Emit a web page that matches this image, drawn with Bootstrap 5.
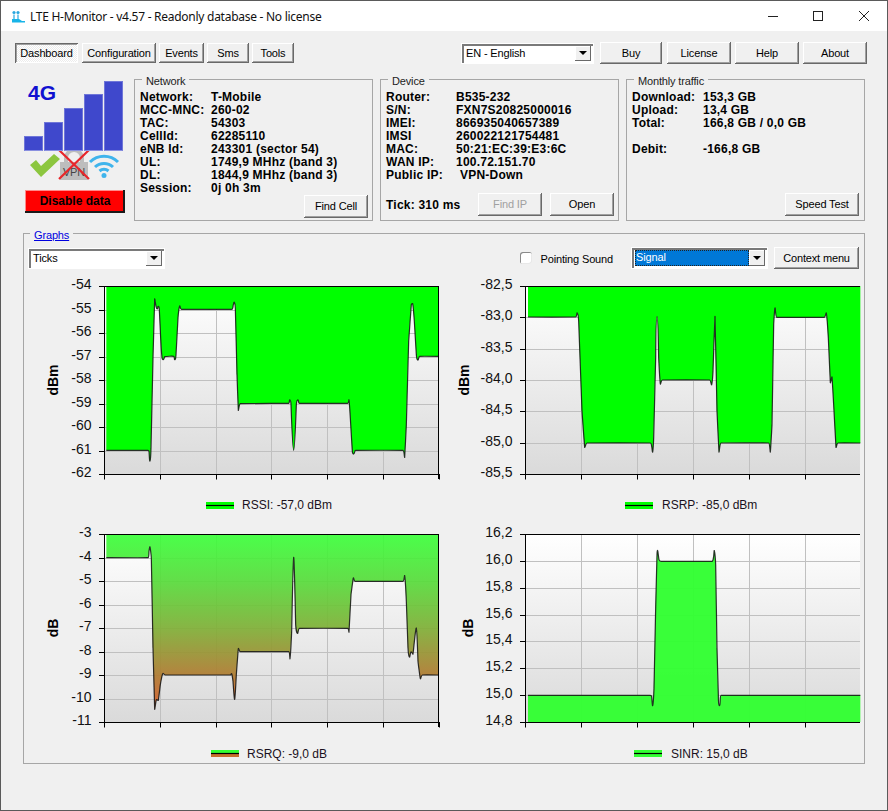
<!DOCTYPE html>
<html lang="en">
<head>
<meta charset="utf-8">
<title>LTE H-Monitor</title>
<link href="https://cdn.jsdelivr.net/npm/bootstrap@5.3.0/dist/css/bootstrap.min.css" rel="stylesheet">
<style>
html,body{margin:0;background:#f0f0f0;}
body{font-family:"Liberation Sans",Arial,sans-serif;font-size:11px;line-height:13px;color:#000;letter-spacing:-.15px;overflow:hidden;}
.appwin{width:888px;height:811px;background:#f0f0f0;outline:1px solid #5a5a5a;outline-offset:-1px;position:relative;}
.titlebar{height:31px;background:#fff;padding-left:11px;border-top:1px solid #444;}
.titletext{font-family:"Noto Sans",sans-serif;font-size:12px;letter-spacing:-.27px;color:#111;margin-left:4px;}
.winctl{margin-left:auto;}
.toprow{height:42px;padding:11px 21px 0 15px;}
.wbtn{--bs-btn-padding-x:0;--bs-btn-padding-y:0;font-family:"Liberation Sans",Arial,sans-serif;font-size:11px;letter-spacing:-.15px;line-height:13px;color:#000;background:#f0f0f0;border:0;border-radius:0;height:22px;padding:0;box-shadow:inset -1px -1px 0 #696969,inset 1px 1px 0 #fff,inset -2px -2px 0 #a0a0a0;}
.wbtn:disabled{color:#a0a0a0;background:#f0f0f0;opacity:1;}
.tabbtn{height:20px;}
.tabrow{margin-top:1px;}
.tabon{margin-right:1px;background:repeating-conic-gradient(#fff 0 25%,#ececec 0 50%) 0 0/2px 2px;box-shadow:inset 1px 1px 0 #696969,inset -1px -1px 0 #fff,inset 2px 2px 0 #a0a0a0;}
.w-dash{width:63px}.w-conf{width:74px}.w-ev{width:45px}.w-sms{width:42px}.w-tools{width:42px}
.w-62{width:62px}.w-64{width:64px}.w-74{width:74px}.w-85{width:85px}
.gap-3px{gap:3px}.gap-4px{gap:4px}
.wcombo{height:19px;background:#fff;box-shadow:inset 2px 2px 0 #7a7a7a,inset -1px -1px 0 #fff;padding:2px 2px 2px 3px;font-size:11px;line-height:15px;outline:1px solid #fff;outline-offset:0;}
.wcombo-lang{width:131px;margin-right:3px;}
.wcombo-ticks{width:135px;}
.wcombo-sig{width:135px;height:20px;}
.combotext{flex:1;min-width:0;padding-left:1px;}
.combosel{background:#0078d7;color:#fff;outline:1px dotted #222;outline-offset:-1px;}
.comboarrow{width:16px;background:#f0f0f0;box-shadow:inset -1px -1px 0 #696969,inset 1px 1px 0 #fff;}
.comboarrow::after{content:"";border-left:4px solid transparent;border-right:4px solid transparent;border-top:4px solid #000;}
.buygap{margin-right:1px;}
.inforow{height:148px;padding-left:15px;}
.leftcol{width:119px;flex:none;}
.sigwrap{width:99px;height:70px;margin:8px 0 0 9px;gap:1px;position:relative;}
.sigbar{width:19px;background:#3f48cc;border:1px solid #6f76d8;border-bottom-color:#8a90e0;}
.tag4g{position:absolute;left:4px;top:0;font-size:21px;line-height:24px;font-weight:700;color:#1010d0;letter-spacing:0;}
.stateicons{display:block;margin:-1px 0 0 9px;}
.redbtn{display:block;width:100px;height:23px;margin:10px 0 0 10px;background:#f00;color:#000;font-weight:700;font-size:12px;letter-spacing:0;box-shadow:inset -2px -2px 0 #1a1a1a,inset 1px 1px 0 #ff8a8a;}
.redbtn:hover{background:#f00;color:#000;}
.gbox{border:1px solid #a6a6a6;border-radius:0;margin:0;min-width:0;padding:3px 4px 4px 5px;}
.gbox>legend{float:none;width:auto;font-size:11px;line-height:13px;margin:0 0 0 2px;padding:4px 4px 0;color:#222;}
.infobox{width:239px;height:150px;margin:-2px 7px 0 0;}
.infobox.lastbox{padding-right:5px;margin-right:0;}
.datagrid{display:grid;grid-template-columns:71px 1fr;font-weight:700;font-size:12px;line-height:13px;letter-spacing:.22px;color:#000;}
.devgrid{grid-template-columns:70px 1fr;}
.datagrid span{white-space:nowrap;}
.pushval{padding-left:4px;}
.tickval{font-weight:700;font-size:12px;letter-spacing:.22px;margin-top:2px;}
.footrow{height:23px;}
.graphbox{width:842px;height:539px;margin:4px 0 0 23px;padding:5px 5px 0 5px;}
.graphbox>legend{margin-left:1px;}
.graphbox>legend a{color:#0000e0;}
.ctlrow{height:22px;}
.wcheck{width:12px;height:12px;margin:0 8px 0 0;border-radius:0;border:0;background:#fff;box-shadow:inset 1px 1px 0 #8a8a8a,inset -1px -1px 0 #e8e8e8;flex:none;}
.sndlabel{margin:2px 19px 0 0;}
.sigcombo{margin-right:7px;}
.chartgrid{display:grid;grid-template-columns:412px 412px;column-gap:9px;row-gap:5px;margin:3px 0 0 1px;}
.chartsvg{display:block;width:412px;height:243px;overflow:visible;}
.chartsvg text{font-family:"Liberation Sans",Arial,sans-serif;letter-spacing:0;}
</style>
</head>
<body>
<div class="appwin">
  <div class="titlebar d-flex align-items-center">
    <svg width="15" height="15" viewBox="0 0 15 15">
      <path d="M3 5.500V10M7 5.500V10" stroke="#2aa7df" stroke-width="1.200" fill="none"/>
      <circle cx="3" cy="3.500" r="1.600" fill="#2aa7df"/><circle cx="7" cy="3.500" r="1.600" fill="#2aa7df"/>
      <path d="M1 10h7l3 2h3v1.500H1z" fill="#18b4e8"/>
    </svg>
    <span class="titletext">LTE H-Monitor - v4.57 - Readonly database - No license</span>
    <svg class="winctl" width="120" height="30" viewBox="0 0 120 30">
      <path d="M0 15.500h10" stroke="#222" fill="none"/>
      <rect x="45.500" y="10.500" width="9" height="9" stroke="#222" fill="none"/>
      <path d="M91 10 101 20M101 10 91 20" stroke="#222" fill="none"/>
    </svg>
  </div>

  <div class="toprow d-flex align-items-start">
    <div class="tabrow d-flex gap-3px">
      <button type="button" class="btn wbtn tabbtn tabon w-dash">Dashboard</button>
      <button type="button" class="btn wbtn tabbtn w-conf">Configuration</button>
      <button type="button" class="btn wbtn tabbtn w-ev">Events</button>
      <button type="button" class="btn wbtn tabbtn w-sms">Sms</button>
      <button type="button" class="btn wbtn tabbtn w-tools">Tools</button>
    </div>
    <div class="ms-auto d-flex align-items-center gap-4px">
      <div class="wcombo wcombo-lang d-flex"><span class="combotext">EN - English</span><span class="comboarrow d-flex align-items-center justify-content-center"></span></div>
      <button type="button" class="btn wbtn w-62 buygap">Buy</button>
      <button type="button" class="btn wbtn w-64">License</button>
      <button type="button" class="btn wbtn w-64">Help</button>
      <button type="button" class="btn wbtn w-64">About</button>
    </div>
  </div>

  <div class="inforow d-flex">
    <div class="leftcol">
      <div class="sigwrap d-flex align-items-end">
        <div class="sigbar" style="height:15px"></div>
        <div class="sigbar" style="height:29px"></div>
        <div class="sigbar" style="height:43px"></div>
        <div class="sigbar" style="height:57px"></div>
        <div class="sigbar" style="height:70px"></div>
        <span class="tag4g">4G</span>
      </div>
      <svg class="stateicons" width="100" height="30" viewBox="0 0 100 30">
        <path d="M6 15 12 10 17 16 30 4 36 9 17 27z" fill="#8cc63f"/>
        <path d="M42 12V8a8 8 0 0 1 16 0v4" stroke="#bdbdbd" stroke-width="4" fill="none"/>
        <rect x="36" y="12" width="28" height="18" fill="#bdbdbd"/>
        <text x="50" y="26" text-anchor="middle" font-size="11" fill="#444" font-family="Liberation Sans">VPN</text>
        <path d="M35 0 65 29M65 0 35 29" stroke="#e8262b" stroke-width="2.200"/>
        <path d="M66 12A20 20 0 0 1 94 12M71 17A13 13 0 0 1 89 17M75.500 21A7 7 0 0 1 84.500 21" stroke="#3fb4ec" stroke-width="3" fill="none"/>
        <circle cx="80" cy="25.500" r="2.500" fill="#3fb4ec"/>
      </svg>
      <button type="button" class="btn wbtn redbtn">Disable data</button>
    </div>

    <fieldset class="gbox infobox d-flex flex-column justify-content-between">
      <legend>Network</legend>
      <div class="datagrid">
        <span>Network:</span><span>T-Mobile</span>
        <span>MCC-MNC:</span><span>260-02</span>
        <span>TAC:</span><span>54303</span>
        <span>CellId:</span><span>62285110</span>
        <span>eNB Id:</span><span>243301 (sector 54)</span>
        <span>UL:</span><span>1749,9 MHhz (band 3)</span>
        <span>DL:</span><span>1844,9 MHhz (band 3)</span>
        <span>Session:</span><span>0j 0h 3m</span>
      </div>
      <div class="footrow d-flex justify-content-end"><button type="button" class="btn wbtn w-64 footrow">Find Cell</button></div>
    </fieldset>

    <fieldset class="gbox infobox d-flex flex-column justify-content-between">
      <legend>Device</legend>
      <div class="datagrid devgrid">
        <span>Router:</span><span>B535-232</span>
        <span>S/N:</span><span>FXN7S20825000016</span>
        <span>IMEI:</span><span>866935040657389</span>
        <span>IMSI</span><span>260022121754481</span>
        <span>MAC:</span><span>50:21:EC:39:E3:6C</span>
        <span>WAN IP:</span><span>100.72.151.70</span>
        <span>Public IP:</span><span class="pushval">VPN-Down</span>
      </div>
      <div class="footrow d-flex align-items-center">
        <span class="tickval me-auto">Tick: 310 ms</span>
        <button type="button" class="btn wbtn w-64 footrow me-1" disabled>Find IP</button>
        <button type="button" class="btn wbtn w-64 footrow ms-1">Open</button>
      </div>
    </fieldset>

    <fieldset class="gbox infobox lastbox d-flex flex-column justify-content-between">
      <legend>Monthly traffic</legend>
      <div class="datagrid">
        <span>Download:</span><span>153,3 GB</span>
        <span>Upload:</span><span>13,4 GB</span>
        <span>Total:</span><span>166,8 GB / 0,0 GB</span>
        <span>&nbsp;</span><span>&nbsp;</span>
        <span>Debit:</span><span>-166,8 GB</span>
      </div>
      <div class="footrow d-flex justify-content-end"><button type="button" class="btn wbtn w-74 footrow">Speed Test</button></div>
    </fieldset>
  </div>

  <fieldset class="gbox graphbox">
    <legend><a href="#">Graphs</a></legend>
    <div class="ctlrow d-flex align-items-center">
      <div class="wcombo wcombo-ticks d-flex"><span class="combotext">Ticks</span><span class="comboarrow d-flex align-items-center justify-content-center"></span></div>
      <input class="form-check-input wcheck ms-auto" type="checkbox" aria-label="Pointing Sound">
      <span class="sndlabel">Pointing Sound</span>
      <div class="wcombo wcombo-sig sigcombo d-flex"><span class="combotext combosel">Signal</span><span class="comboarrow d-flex align-items-center justify-content-center"></span></div>
      <button type="button" class="btn wbtn w-85">Context menu</button>
    </div>
    <div class="chartgrid" id="charts"></div>
  </fieldset>
</div>

<script src="https://cdn.jsdelivr.net/npm/bootstrap@5.3.0/dist/js/bootstrap.bundle.min.js"></script>
<script>
var L=[0,56,112,166.6,222.6,278.6,334.6], R=[0,56,112,168,224,280];
var charts=[
 {ox:281,oy:184,vx:L,right:true,labels:["-54","-55","-56","-57","-58","-59","-60","-61","-62"],unit:"dBm",ux:23,
  side:"top",fill:"#00ff00",op:1,sw:176,tx:212,leg:"RSSI: -57,0 dBm",ty:7,
  pts:"288,677 413,677 416,680 419,709 422,670 428,400 433,223 437,245 441,253 444,245 447,255 451,340 455,398 459,405 464,396 490,395 494,405 497,390 503,280 508,244 513,254 665,254 669,240 672,233 675,250 680,450 684,557 690,537 835,536 839,526 842,540 850,677 858,540 862,526 867,536 1012,536 1016,526 1020,580 1026,680 1030,688 1036,677 1178,677 1183,698 1188,600 1195,350 1203,240 1207,237 1212,290 1218,390 1222,406 1228,395 1285,395"},
 {ox:224,oy:184,vx:R,right:false,labels:["-82,5","-83,0","-83,5","-84,0","-84,5","-85,0","-85,5"],unit:"dBm",ux:13,
  side:"top",fill:"#00ff00",op:1,sw:174,tx:211,leg:"RSRP: -85,0 dBm",ty:7,
  pts:"233,277 376,277 381,265 385,290 395,560 403,668 410,655 600,655 604,665 607,682 610,640 616,400 620,275 625,400 630,478 636,466 778,466 784,480 788,440 794,275 800,560 806,682 812,655 955,655 960,682 965,600 970,300 974,250 979,278 1122,278 1128,265 1134,340 1140,474 1145,457 1150,540 1157,668 1163,655 1230,655"},
 {ox:281,oy:58,vx:L,right:true,labels:["-3","-4","-5","-6","-7","-8","-9","-10","-11"],unit:"dB",ux:23,
  side:"top",fill:"url(#gradq)",op:.93,sw:181,tx:217,leg:"RSRQ: -9,0 dB",swq:true,ty:8,
  pts:"288,129 413,129 416,110 419,97 423,130 428,400 433,584 438,555 444,557 450,510 457,477 465,481 660,481 664,477 668,500 673,554 678,480 684,402 690,411 835,411 839,432 844,350 850,128 856,330 861,356 867,341 1012,341 1016,352 1022,240 1029,190 1034,200 1178,200 1183,183 1188,260 1193,400 1197,427 1202,412 1208,418 1218,340 1223,440 1230,492 1236,481 1285,481"},
 {ox:224,oy:58,vx:R,right:false,labels:["16,2","16,0","15,8","15,6","15,4","15,2","15,0","14,8"],unit:"dB",ux:17,
  side:"bottom",fill:"#33ff33",op:.97,sw:183,tx:220,leg:"SINR: 15,0 dB",ty:8,
  pts:"233,542 600,542 604,545 607,573 611,520 616,280 620,120 622,108 626,135 632,140 785,140 790,125 792,108 796,150 800,400 804,540 807,573 812,542 1230,542"}
];
function smooth(p){
  var d="",i,f=function(n){return n.toFixed(2);};
  function tan(i){
    var a=p[Math.max(i-1,0)],b=p[Math.min(i+1,p.length-1)],x=b[0]-a[0],y=b[1]-a[1],l=Math.hypot(x,y)||1;
    return [x/l,y/l];
  }
  for(i=0;i<p.length-1;i++){
    var a=p[i],b=p[i+1],s=Math.min(Math.hypot(b[0]-a[0],b[1]-a[1])*.33,1.2),t1=tan(i),t2=tan(i+1);
    d+="C"+f(a[0]+t1[0]*s)+" "+f(a[1]+t1[1]*s)+" "+f(b[0]-t2[0]*s)+" "+f(b[1]-t2[1]*s)+" "+f(b[0])+" "+f(b[1]);
  }
  return d;
}
var px=74,py=14,pw=335,ph=188,h="";
charts.forEach(function(c,n){
  var s='<svg class="chartsvg" viewBox="0 0 412 243" role="img"><defs>'+
   '<linearGradient id="bg'+n+'" x1="0" y1="0" x2="0" y2="1"><stop offset="0" stop-color="#ffffff"/><stop offset="1" stop-color="#dadada"/></linearGradient>'+
   (c.swq?'<linearGradient id="gradq" gradientUnits="userSpaceOnUse" x1="0" y1="14" x2="0" y2="202"><stop offset="0" stop-color="#3cff3c"/><stop offset=".25" stop-color="#58dc3c"/><stop offset=".5" stop-color="#80b038"/><stop offset=".75" stop-color="#b07c32"/><stop offset=".95" stop-color="#dc5a2c"/></linearGradient>'+
    '<linearGradient id="swq" x1="0" y1="0" x2="0" y2="1"><stop offset="0" stop-color="#33ff33"/><stop offset=".5" stop-color="#33ff33"/><stop offset=".5" stop-color="#c8702e"/><stop offset="1" stop-color="#c8702e"/></linearGradient>':'')+
   '</defs><rect x="'+px+'" y="'+py+'" width="'+pw+'" height="'+ph+'" fill="url(#bg'+n+')"/>';
  var steps=c.labels.length-1,i,y,x;
  for(i=1;i<steps;i++){y=Math.round(i*ph/steps)+py+.5;s+='<path d="M'+px+' '+y+'h'+pw+'" stroke="#c0c0c0"/>';}
  c.vx.forEach(function(v,k){x=Math.round(v)+px+.5;if(k>0&&v<330)s+='<path d="M'+x+' '+py+'v'+ph+'" stroke="#c0c0c0"/>';});
  var p=c.pts.split(" ").map(function(q){var a=q.split(",");return [px+(a[0]-c.ox)/3,py+(a[1]-c.oy)/3];});
  var curve=smooth(p),x0=p[0][0].toFixed(2),y0=p[0][1].toFixed(2),x1=p[p.length-1][0].toFixed(2);
  var edge=c.side=="top"?py:py+ph;
  s+='<path d="M'+x0+' '+edge+'L'+x0+' '+y0+curve+'L'+x1+' '+edge+'Z" fill="'+c.fill+'" fill-opacity="'+c.op+'"/>';
  s+='<path d="M'+x0+' '+y0+curve+'" fill="none" stroke="#111" stroke-opacity=".85" stroke-width="1.2" stroke-linejoin="round"/>';
  s+='<path d="M'+(px-5)+' '+(py+.5)+'H'+(px+pw)+'M'+(px-5)+' '+(py+ph+.5)+'H'+(px+pw)+'M'+(px+.5)+' '+py+'V'+(py+ph+5)+'" stroke="#000"/>';
  if(c.right)s+='<path d="M'+(px+pw-.5)+' '+py+'V'+(py+ph+5)+'" stroke="#000"/>';
  for(i=0;i<=steps;i++){y=Math.round(i*ph/steps)+py;
    s+='<path d="M'+(px-5)+' '+(y+.5)+'H'+px+'" stroke="#000"/>';
    s+='<text x="'+(px-12.5)+'" y="'+(y+2.5)+'" text-anchor="end" font-size="14" fill="#111">'+c.labels[i]+'</text>';}
  c.vx.forEach(function(v){x=Math.round(v)+px+.5;s+='<path d="M'+x+' '+(py+ph)+'v5.500" stroke="#000"/>';});
  s+='<text transform="translate('+(c.ux+5)+' 108) rotate(-90)" text-anchor="middle" font-size="14" font-weight="700" fill="#000">'+c.unit+'</text>';
  var ly=230;
  s+='<rect x="'+c.sw+'" y="'+ly+'" width="28" height="7" fill="'+(c.swq?"url(#swq)":c.fill)+'"/><path d="M'+c.sw+' '+(ly+3.5)+'h28" stroke="#000" stroke-width="1.200"/>';
  s+='<text x="'+c.tx+'" y="'+(ly+c.ty)+'" font-size="12" fill="#1a1020">'+c.leg+'</text></svg>';
  h+=s;
});
document.getElementById("charts").innerHTML=h;
</script>
</body>
</html>
